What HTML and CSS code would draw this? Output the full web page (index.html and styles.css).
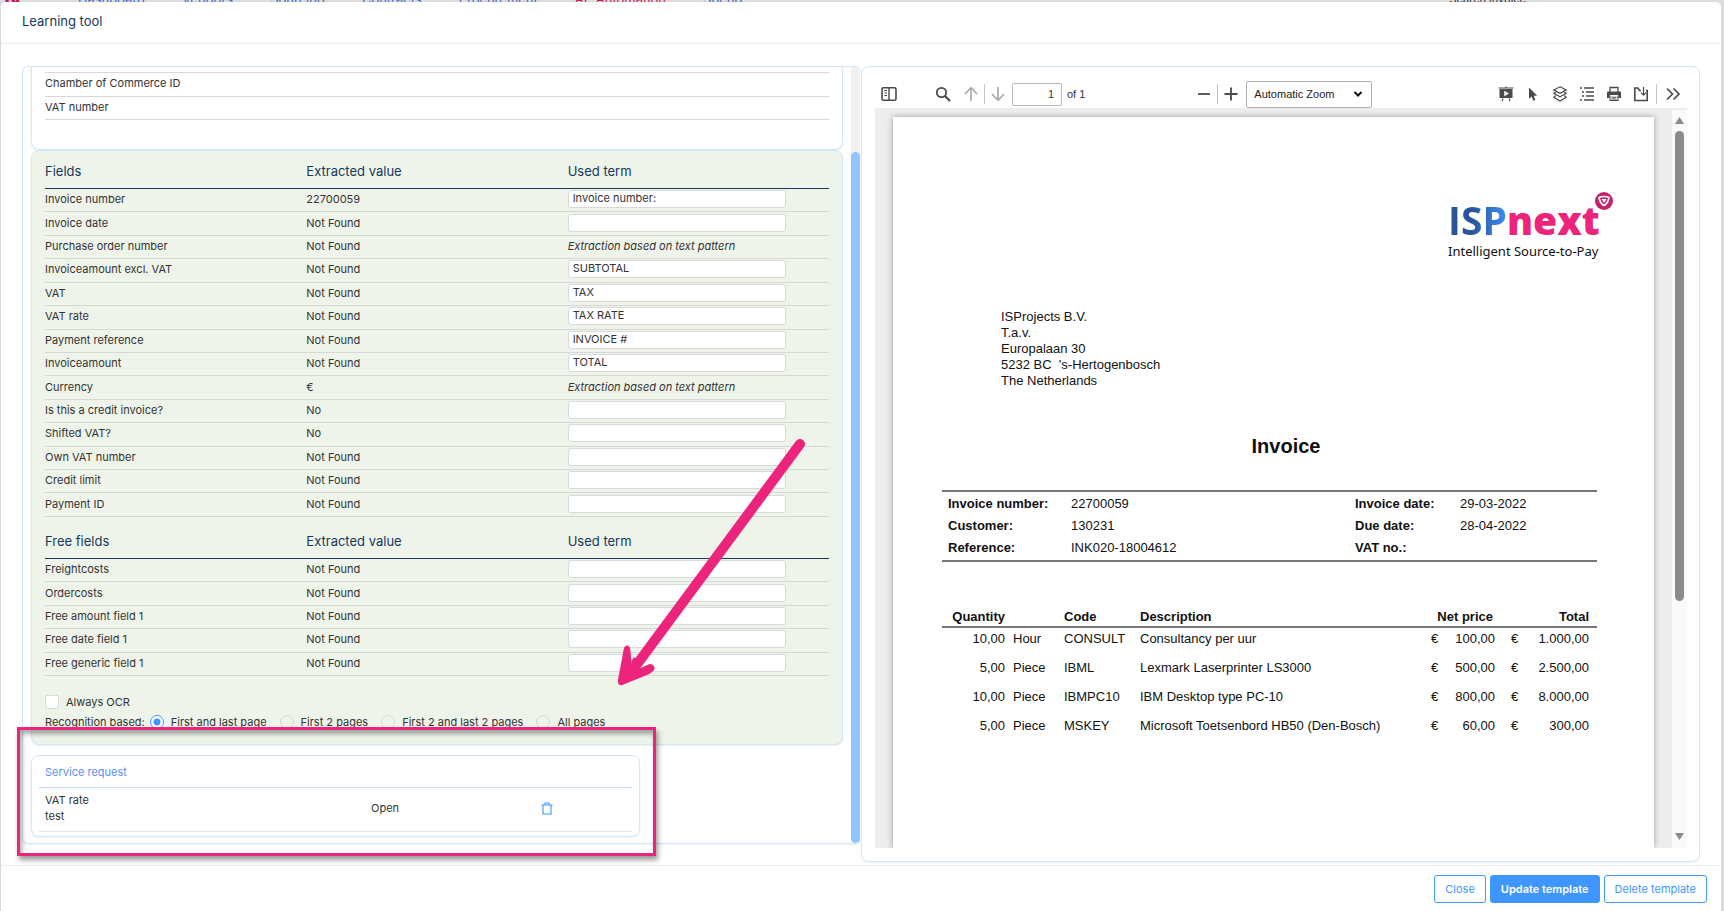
FILE: index.html
```html
<!DOCTYPE html>
<html lang="en">
<head>
<meta charset="utf-8">
<title>Learning tool</title>
<link rel="stylesheet" href="styles.css">
</head>
<body>
<nav class="site-nav">
  <span class="site-logo">N</span>
  <a href="#">Dashboard</a><a href="#">Vendors</a><a href="#">Sourcing</a><a href="#">Contracts</a><a href="#">Procurement</a><a href="#" class="current">AP Automation</a><a href="#">Spend</a>
  <span class="site-search">Search invoice</span>
</nav>
<div class="modal">
  <header class="modal-head"><h1>Learning tool</h1></header>
  <main class="modal-body">
    <section class="left">
      <div class="scroll-area">
        <div class="card supplier">
          <table class="grid-table supplier-table">
            <tbody><tr><td>Chamber of Commerce ID</td></tr><tr><td>VAT number</td></tr></tbody>
          </table>
        </div>
        <div class="card fields">
          <table class="grid-table main-table">
            <thead><tr><th>Fields</th><th>Extracted value</th><th>Used term</th></tr></thead>
            <tbody>
              <tr><td>Invoice number</td><td>22700059</td><td><input aria-label="Invoice number term" value="Invoice number:"></td></tr>
              <tr><td>Invoice date</td><td>Not Found</td><td><input aria-label="Invoice date term"></td></tr>
              <tr><td>Purchase order number</td><td>Not Found</td><td><i>Extraction based on text pattern</i></td></tr>
              <tr><td>Invoiceamount excl. VAT</td><td>Not Found</td><td><input aria-label="Invoiceamount excl. VAT term" value="SUBTOTAL"></td></tr>
              <tr><td>VAT</td><td>Not Found</td><td><input aria-label="VAT term" value="TAX"></td></tr>
              <tr><td>VAT rate</td><td>Not Found</td><td><input aria-label="VAT rate term" value="TAX RATE"></td></tr>
              <tr><td>Payment reference</td><td>Not Found</td><td><input aria-label="Payment reference term" value="INVOICE #"></td></tr>
              <tr><td>Invoiceamount</td><td>Not Found</td><td><input aria-label="Invoiceamount term" value="TOTAL"></td></tr>
              <tr><td>Currency</td><td>€</td><td><i>Extraction based on text pattern</i></td></tr>
              <tr><td>Is this a credit invoice?</td><td>No</td><td><input aria-label="Credit invoice term"></td></tr>
              <tr><td>Shifted VAT?</td><td>No</td><td><input aria-label="Shifted VAT term"></td></tr>
              <tr><td>Own VAT number</td><td>Not Found</td><td><input aria-label="Own VAT number term"></td></tr>
              <tr><td>Credit limit</td><td>Not Found</td><td><input aria-label="Credit limit term"></td></tr>
              <tr><td>Payment ID</td><td>Not Found</td><td><input aria-label="Payment ID term"></td></tr>
            </tbody>
          </table>
          <table class="grid-table free-table">
            <thead><tr><th>Free fields</th><th>Extracted value</th><th>Used term</th></tr></thead>
            <tbody>
              <tr><td>Freightcosts</td><td>Not Found</td><td><input aria-label="Freightcosts term"></td></tr>
              <tr><td>Ordercosts</td><td>Not Found</td><td><input aria-label="Ordercosts term"></td></tr>
              <tr><td>Free amount field 1</td><td>Not Found</td><td><input aria-label="Free amount field 1 term"></td></tr>
              <tr><td>Free date field 1</td><td>Not Found</td><td><input aria-label="Free date field 1 term"></td></tr>
              <tr><td>Free generic field 1</td><td>Not Found</td><td><input aria-label="Free generic field 1 term"></td></tr>
            </tbody>
          </table>
          <div class="options">
            <label class="opt ocr"><input type="checkbox">Always OCR</label>
            <div class="recognition">
              <span>Recognition based:</span>
              <label class="opt"><input type="radio" name="rec" checked>First and last page</label>
              <label class="opt"><input type="radio" name="rec">First 2 pages</label>
              <label class="opt"><input type="radio" name="rec">First 2 and last 2 pages</label>
              <label class="opt"><input type="radio" name="rec">All pages</label>
            </div>
          </div>
        </div>
        <div class="card service">
          <h2>Service request</h2>
          <div class="request">
            <div>VAT rate<br>test</div>
            <div>Open</div>
            <button class="trash" aria-label="Delete request"><svg viewBox="0 0 12 13" width="12" height="13"><path d="M.5 3h11M4 2.700V1h4v1.700M2 3v9h8V3" fill="none" stroke="currentColor" stroke-width="1.100"/></svg></button>
          </div>
        </div>
      </div>
      <div class="scroll-track"><div class="scroll-thumb"></div></div>
    </section>
    <section class="viewer">
      <div class="toolbar">
        <button class="tb side" aria-label="Toggle sidebar"><svg viewBox="0 0 16 16"><rect x="1" y="1.700" width="14" height="12.600" rx="1.500" fill="none" stroke="currentColor" stroke-width="1.600"/><path d="M8 2v12" stroke="currentColor" stroke-width="1.400"/><path d="M3 4.500h3M3.500 7h2.500M3.500 9.500h2.500" stroke="currentColor"/></svg></button>
        <button class="tb" aria-label="Find"><svg viewBox="0 0 16 16"><circle cx="6.500" cy="6.500" r="4.700" fill="none" stroke="currentColor" stroke-width="1.800"/><path d="M10 10l5 5" stroke="currentColor" stroke-width="2.200"/></svg></button>
        <button class="tb dim arrow-up" aria-label="Previous page" disabled><svg viewBox="0 0 16 16"><path d="M8 15V2M2 8l6-6.300L14 8" fill="none" stroke="currentColor" stroke-width="1.700"/></svg></button>
        <span class="sep"></span>
        <button class="tb dim" aria-label="Next page" disabled><svg viewBox="0 0 16 16"><path d="M8 1v13M2 8l6 6.300L14 8" fill="none" stroke="currentColor" stroke-width="1.700"/></svg></button>
        <input class="page-no" aria-label="Page" value="1"><span class="of">of 1</span>
        <div class="zoom">
          <button class="tb" aria-label="Zoom out"><svg viewBox="0 0 16 16"><path d="M2 8h12" stroke="currentColor" stroke-width="1.800"/></svg></button>
          <span class="sep"></span>
          <button class="tb" aria-label="Zoom in"><svg viewBox="0 0 16 16"><path d="M1.500 8h13M8 1.500v13" stroke="currentColor" stroke-width="1.800"/></svg></button>
          <div class="select-wrap"><select aria-label="Zoom"><option>Automatic Zoom</option></select><svg viewBox="0 0 10 8"><path d="M1.500 2L5 5.500 8.500 2" fill="none" stroke="#111" stroke-width="2"/></svg></div>
        </div>
        <div class="tools">
          <button class="tb" aria-label="Presentation"><svg viewBox="0 0 16 16"><path d="M.5 2h15M8 .5V2" stroke="currentColor" stroke-width="1.200"/><path d="M1.500 3h13v9h-13zM6.300 4.700v5.600l4.700-2.800z" fill="currentColor" fill-rule="evenodd"/><path d="M5 12.500L4 15M11 12.500l1 2.500" stroke="currentColor" stroke-width="1.200"/></svg></button>
          <button class="tb" aria-label="Select text"><svg viewBox="0 0 16 16"><path d="M4 1.500v11.200l2.700-2.300 1.700 4.300 2-.8-1.700-4.200h3.500z" fill="currentColor"/></svg></button>
          <button class="tb" aria-label="Layers"><svg viewBox="0 0 16 16" fill="none" stroke="currentColor" stroke-width="1.200"><path d="M8 .8l6.200 3.100L8 7.200 1.800 3.900z"/><path d="M3.700 6L1.800 7.300 8 10.800l6.200-3.500L12.300 6M3.700 9.500l-1.900 1.800L8 15l6.200-3.700-1.900-1.800"/></svg></button>
          <button class="tb" aria-label="Outline"><svg viewBox="0 0 16 16"><path d="M1 2h2M5 2h10M3 6h2M7 6h8M3 10h2M7 10h8M1 14h2M5 14h10" stroke="currentColor" stroke-width="1.600"/></svg></button>
          <button class="tb" aria-label="Print"><svg viewBox="0 0 16 16"><path d="M4 6V1.500h8V6" fill="none" stroke="currentColor" stroke-width="1.300"/><path d="M1 6.500Q1 5.500 2 5.500h12q1 0 1 1V12h-2.500V9h-9v3H1z" fill="currentColor"/><path d="M4 9.500v5h8v-5M5.500 11.200h5M5.500 13h5" fill="none" stroke="currentColor" stroke-width="1.100"/></svg></button>
          <button class="tb" aria-label="Save"><svg viewBox="0 0 16 16"><path d="M8 4.500H6.500L5 2H1.800v12.500h12.400v-10H13" fill="none" stroke="currentColor" stroke-width="1.600"/><path d="M10.500 1v8M8 6.700l2.500 2.500L13 6.700" fill="none" stroke="currentColor" stroke-width="1.200"/></svg></button>
          <span class="sep"></span>
          <button class="tb" aria-label="More tools"><svg viewBox="0 0 16 16"><path d="M2 2.500L7.500 8 2 13.500M8.500 2.500L14 8l-5.500 5.500" fill="none" stroke="currentColor" stroke-width="1.700"/></svg></button>
        </div>
      </div>
      <div class="document">
        <article class="page">
          <div class="brand">
            <svg class="brand-mark" viewBox="0 0 18 18" width="18" height="18"><circle cx="9" cy="9" r="9" fill="#c2246b"/><path d="M4 5.500Q9 3.500 14 5.500 13 11.500 9 13.500 5 11.500 4 5.500z" fill="none" stroke="#fff" stroke-width="1.600"/><path d="M6.500 7h5L9.200 11z" fill="#fff"/></svg>
            <div class="brand-name"><span>ISP</span><b>next</b></div>
            <div class="brand-tag">Intelligent Source-to-Pay</div>
          </div>
          <address>ISProjects B.V.<br>T.a.v.<br>Europalaan 30<br>5232 BC &nbsp;'s-Hertogenbosch<br>The Netherlands</address>
          <h2>Invoice</h2>
          <dl class="meta">
            <dt>Invoice number:</dt><dd>22700059</dd><dt>Invoice date:</dt><dd>29-03-2022</dd>
            <dt>Customer:</dt><dd>130231</dd><dt>Due date:</dt><dd>28-04-2022</dd>
            <dt>Reference:</dt><dd>INK020-18004612</dd><dt>VAT no.:</dt><dd></dd>
          </dl>
          <table class="lines">
            <colgroup><col class="c1"><col class="c2"><col class="c3"><col><col class="c5"><col class="c6"><col class="c7"><col class="c8"></colgroup>
            <thead><tr><th class="num">Quantity</th><th></th><th>Code</th><th>Description</th><th colspan="2" class="num net">Net price</th><th colspan="2" class="num">Total</th></tr></thead>
            <tbody>
              <tr><td class="num">10,00</td><td>Hour</td><td>CONSULT</td><td>Consultancy per uur</td><td>€</td><td class="num">100,00</td><td class="cur">€</td><td class="num">1.000,00</td></tr>
              <tr><td class="num">5,00</td><td>Piece</td><td>IBML</td><td>Lexmark Laserprinter LS3000</td><td>€</td><td class="num">500,00</td><td class="cur">€</td><td class="num">2.500,00</td></tr>
              <tr><td class="num">10,00</td><td>Piece</td><td>IBMPC10</td><td>IBM Desktop type PC-10</td><td>€</td><td class="num">800,00</td><td class="cur">€</td><td class="num">8.000,00</td></tr>
              <tr><td class="num">5,00</td><td>Piece</td><td>MSKEY</td><td>Microsoft Toetsenbord HB50 (Den-Bosch)</td><td>€</td><td class="num">60,00</td><td class="cur">€</td><td class="num">300,00</td></tr>
            </tbody>
          </table>
        </article>
        <div class="doc-scroll"><svg viewBox="0 0 9 8" width="9" height="8"><path d="M4.500 1L9 8H0z" fill="#8b8b8b"/></svg><div class="doc-thumb"></div><svg viewBox="0 0 9 8" width="9" height="8"><path d="M4.500 7L9 0H0z" fill="#8b8b8b"/></svg></div>
      </div>
    </section>
  </main>
  <footer class="modal-foot">
    <button class="btn">Close</button><button class="btn primary">Update template</button><button class="btn">Delete template</button>
  </footer>
</div>
<div class="callout-box"></div>
<svg class="callout-arrow" viewBox="0 0 200 256" width="200" height="256"><path d="M186 9L24 228" stroke="#ed247b" stroke-width="10" stroke-linecap="round"/><path d="M24 224L18 240" stroke="#ed247b" stroke-width="10"/><path d="M11 213Q13 210 15 213L17 230 27 234 36 230Q41 231 39 235L35 238 8 249Q4 250 5 245z" fill="#ed247b" stroke="#ed247b" stroke-width="2" stroke-linejoin="round"/></svg>
</body>
</html>
```
FILE: styles.css
```css
* { box-sizing: border-box; }
body {
  margin: 0;
  height: 100vh;
  overflow: hidden;
  position: relative;
  display: flex;
  flex-direction: column;
  background: #dcdcdc;
  font-family: Inter, "Liberation Sans", sans-serif;
  font-size: 11px;
  color: #333;
}
button, input, select { font: inherit; color: inherit; margin: 0; }
h1, h2 { margin: 0; font-weight: 400; }

.site-nav {
  flex: none;
  height: 2px;
  overflow: hidden;
  padding-left: 4px;
  padding-right: 198px;
  display: flex;
  align-items: flex-end;
  gap: 37px;
  font-size: 13px;
  line-height: 6px;
}
.site-nav a { color: #4668c5; text-decoration: none; }
.site-nav a.current { color: #c0185f; }
.site-logo { width: 37px; color: #c0185f; font-size: 22px; font-weight: 700; }
.site-search { margin-left: auto; font-size: 11px; }

.modal {
  flex: 1;
  min-height: 0;
  margin: 0 3px 0 1px;
  background: #fff;
  border-radius: 5px 5px 0 0;
  display: flex;
  flex-direction: column;
}
.modal-head { flex: none; height: 42px; padding: 9px 21px; border-bottom: 1px solid #e8edf0; }
.modal-head h1 { font-size: 13px; line-height: 20px; color: #16395b; }
.modal-body {
  flex: 1;
  min-height: 0;
  padding: 22px 21px 3px;
  display: grid;
  grid-template-columns: 1fr 1fr;
  border-bottom: 1px solid #ebedef;
}
.modal-foot { flex: none; height: 45px; padding: 9px 14px; display: flex; justify-content: flex-end; gap: 4px; }
.btn {
  height: 28px;
  padding: 0 10px;
  background: #fff;
  border: 1px solid #4096ff;
  border-radius: 3px;
  color: #4096ff;
}
.btn.primary { background: #4096ff; color: #fff; font-weight: 600; }

.left {
  min-height: 0;
  margin-bottom: 18px;
  border: 1px solid #cfe7fa;
  border-right: 0;
  border-radius: 6px;
  box-shadow: 0 1px 2px #0001;
  overflow: hidden;
  display: flex;
}
.scroll-area { flex: 1; padding: 0 8px; overflow: hidden; }
.scroll-track { width: 10px; padding-right: 1px; background: linear-gradient(#f0f0f0, #f0f0f0) 0 0 / 9px 100% no-repeat; display: flex; flex-direction: column; }
.scroll-thumb { flex: 1; margin-top: 85px; border-radius: 5px; background: #91c5ff; }

.card { border: 1px solid #cfe7fa; border-radius: 8px; box-shadow: 0 1px 2px #0001; background: #fff; }
.supplier { height: 83px; border-top: 0; border-radius: 0 0 8px 8px; padding: 5px 13px; }
.fields { background: #eef4ea; padding: 0 13px; height: 595px; }
.grid-table { width: 100%; border-collapse: separate; border-spacing: 0; table-layout: fixed; }
.grid-table td { height: 23px; padding: 0 0 2px; border-bottom: 1px solid #d6d8d8; vertical-align: middle; line-height: 16px; }
.supplier-table { height: 48px; border-top: 1px solid #d6d8d8; }
.grid-table th { padding: 0 0 8px; text-align: left; vertical-align: bottom; font-weight: 400; font-size: 13px; line-height: 18px; color: #16395b; border-bottom: 1px solid #16395b; }
.main-table { height: 366px; }
.main-table th { height: 38px; }
.free-table { height: 159px; }
.free-table th { height: 42px; }
.grid-table input {
  display: block;
  width: 218px;
  height: 18px;
  padding: 0 4px 2px;
  border: 1px solid #d9d9d9;
  border-radius: 3px;
  background: #fff;
}
.options { padding-top: 19px; }
.opt { display: flex; align-items: center; }
.opt input { appearance: none; flex: none; width: 14px; height: 14px; margin-right: 7px; border: 1px solid #d9d9d9; background: #fff; border-radius: 2px; }
.opt input[type=radio] { border-radius: 50%; background: transparent; }
.opt input[type=radio]:checked { border-color: #4096ff; background: radial-gradient(circle, #4096ff 3px, #fff 4px); }
.recognition { display: flex; align-items: center; gap: 13px; margin-top: 6px; }
.recognition span { margin-right: -8px; }

.service { width: 609px; margin-top: 10px; padding: 0 7px; height: 82px; }
.service h2 { height: 32px; padding: 8px 6px; font-size: 11px; line-height: 16px; color: #5b8ff9; border-bottom: 1px solid #bfdffb; }
.request { display: grid; grid-template-columns: 326px 170px 1fr; align-items: center; height: 44px; padding: 0 0 3px 6px; line-height: 16px; border-bottom: 1px solid #e4e6e8; }
.trash { justify-self: start; padding: 0; border: 0; background: none; color: #4096ff; height: 16px; }
.trash svg { display: block; }

.viewer {
  min-height: 0;
  padding: 0 12px 13px 13px;
  border: 1px solid #cfe7fa;
  border-radius: 8px;
  box-shadow: 0 1px 2px #0001;
  display: flex;
  flex-direction: column;
  font-family: "Liberation Sans", Arial, sans-serif;
}
.toolbar { flex: none; height: 41px; padding: 13px 6px 0; display: flex; align-items: center; color: #333; }
.tb { width: 16px; height: 16px; padding: 0; border: 0; background: none; color: #4a4a4a; }
.tb svg { display: block; width: 16px; height: 16px; }
.tb.dim { color: #aaa; }
.side { margin-right: 38px; }
.sep { width: 1px; height: 20px; margin: 0 5px; background: #c4c4c4; }
.arrow-up { margin-left: 12px; }
.page-no { width: 50px; height: 23px; margin-left: 6px; padding: 0 7px; border: 1px solid #b9b9bb; border-radius: 2px; text-align: right; }
.of { margin-left: 5px; }
.zoom { margin-left: 111px; display: flex; align-items: center; }
.select-wrap { display: flex; align-items: center; margin-left: 7px; position: relative; }
.select-wrap select { appearance: none; width: 126px; height: 27px; padding: 0 7px; border: 1px solid #b0b0b2; border-radius: 2px; background: #fff; color: #222; }
.select-wrap svg { position: absolute; right: 9px; width: 10px; height: 8px; }
.tools { margin-left: auto; display: flex; align-items: center; gap: 11px; }
.tools .sep { margin: 0 -3px 0 -4px; }

.document { flex: 1; min-height: 0; display: flex; background: #ededed; padding-left: 18px; overflow: hidden; }
.page { flex: 1; margin-top: 9px; padding: 75px 57px 0 49px; background: #fff; box-shadow: 0 0 6px #0005; font-size: 13px; color: #111; overflow: hidden; }
.doc-scroll { flex: none; width: 15px; margin: 2px 0 0 18px; padding: 6px 0 7px; background: #fafafa; display: flex; flex-direction: column; align-items: center; }
.doc-thumb { width: 9px; height: 470px; margin: 7px 0 auto; border-radius: 5px; background: #8b8b8b; }

.brand { position: relative; width: 165px; height: 70px; margin-left: auto; margin-right: -16px; padding-top: 4px; font-family: "Open Sans", "Noto Sans", sans-serif; }
.brand-mark { position: absolute; right: 0; top: 0; }
.brand-name { font-size: 39px; line-height: 48px; font-weight: 700; }
.brand-name span { color: transparent; background: linear-gradient(90deg, #28559a 40%, #3d8df5); background-clip: text; }
.brand-name b { color: #ed247b; }
.brand-tag { font-family: "Noto Sans", sans-serif; font-size: 13px; line-height: 14px; white-space: nowrap; }
.page address { margin: 47px 0 0 59px; font-style: normal; line-height: 16px; }
.page h2 { margin-top: 44px; padding-left: 33px; text-align: center; font-size: 20px; line-height: 26px; font-weight: 700; }
.meta { margin: 31px 0 0; padding: 1px 6px; border-top: 2px solid #777; border-bottom: 2px solid #777; display: grid; grid-template-columns: 123px 1fr 105px 131px; line-height: 22px; }
.meta dt { font-weight: 700; }
.meta dd { margin: 0; }
.lines { width: 100%; margin-top: 46px; border-collapse: separate; border-spacing: 0; table-layout: fixed; }
.lines th, .lines td { padding: 0; text-align: left; vertical-align: top; white-space: nowrap; }
.lines th { font-weight: 700; height: 20px; line-height: 18px; border-bottom: 2px solid #777; }
.lines td { height: 29px; line-height: 22px; }
.lines .num { text-align: right; padding-right: 8px; }
.lines .net { padding-right: 10px; }
.lines .cur { padding-left: 8px; }
.c1 { width: 71px; } .c2 { width: 51px; } .c3 { width: 76px; }
.c5 { width: 24px; } .c6 { width: 48px; } .c7 { width: 24px; } .c8 { width: 70px; }

.callout-box { position: absolute; left: 17px; top: 727px; width: 639px; height: 129px; border: 3px solid #ed247b; box-shadow: 2px 4px 5px #0006, inset 2px 4px 5px #0005; }
.callout-arrow { position: absolute; left: 614px; top: 435px; }
```
